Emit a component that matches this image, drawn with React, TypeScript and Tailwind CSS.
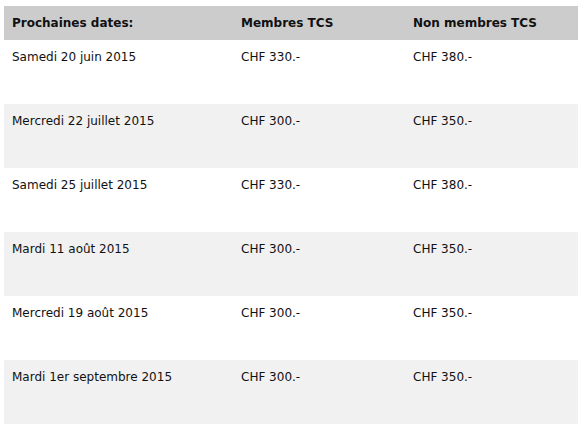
const rows = [
  ["Samedi 20 juin 2015", "CHF 330.-", "CHF 380.-"],
  ["Mercredi 22 juillet 2015", "CHF 300.-", "CHF 350.-"],
  ["Samedi 25 juillet 2015", "CHF 330.-", "CHF 380.-"],
  ["Mardi 11 août 2015", "CHF 300.-", "CHF 350.-"],
  ["Mercredi 19 août 2015", "CHF 300.-", "CHF 350.-"],
  ["Mardi 1er septembre 2015", "CHF 300.-", "CHF 350.-"],
];

export default function App() {
  return (
    <div className="min-h-[432px] bg-white pt-[6px] pl-[4px] pr-[4px] text-[12px] text-[#111] [font-family:Verdana,'DejaVu_Sans',sans-serif]">
      <div className="grid h-[34px] grid-cols-[229px_172px_1fr] items-center bg-[#cccccc] font-bold">
        <div className="pl-2">Prochaines dates:</div>
        <div className="pl-2">Membres TCS</div>
        <div className="pl-2">Non membres TCS</div>
      </div>
      {rows.map((row, i) => (
        <div
          key={row[0]}
          className={`grid h-[64px] grid-cols-[229px_172px_1fr] pt-[8px] leading-[18px] ${i % 2 ? "bg-[#f1f1f1]" : "bg-white"}`}
        >
          <div className="pl-2">{row[0]}</div>
          <div className="pl-2">{row[1]}</div>
          <div className="pl-2">{row[2]}</div>
        </div>
      ))}
    </div>
  );
}
